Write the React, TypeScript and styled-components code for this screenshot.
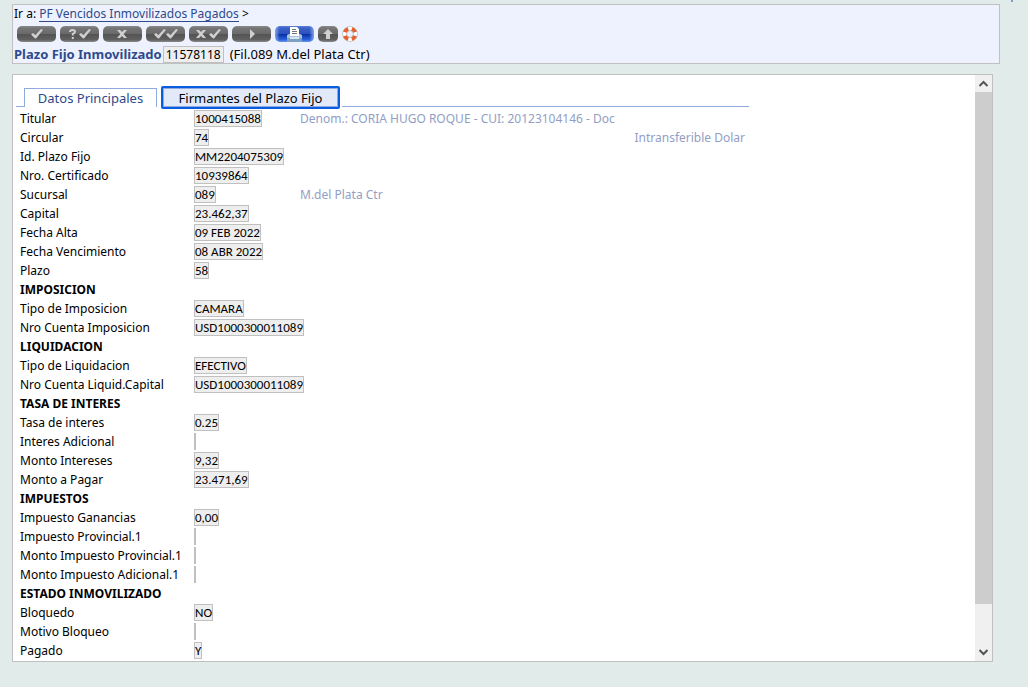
import React from 'react';
import styled, { createGlobalStyle, css } from 'styled-components';

const Global = createGlobalStyle`
  * { box-sizing: border-box; }
  html { background: #e1ebe9; }
  body {
    margin: 0;
    background: #e1ebe9;
    color: #000;
    font: 12px/18px "Trebuchet MS", "Noto Sans", sans-serif;
  }
`;

const Page = styled.div`
  position: relative;
  display: flex;
  flex-direction: column;
  gap: 10px;
  padding: 4px 28px 24px 12px;
`;

const CornerMark = styled.span`
  position: absolute;
  top: 0;
  right: 15px;
  width: 2px;
  height: 2px;
  background: #7b9cc4;
`;

const Header = styled.header`
  border: 1px solid #c0c0c0;
  background: #eef2ff;
  padding-left: 1px;
`;

const Line = styled.div<{ $large?: boolean }>`
  display: flex;
  align-items: center;
  height: 18px;
  font-size: ${p => (p.$large ? 13 : 12)}px;
  white-space: pre;
`;

const Crumb = styled.a`
  color: #2e4a8c;
  line-height: 15px;
  text-decoration: none;
  border-bottom: 1px solid #2e4a8c;
`;

const Title = styled.h1`
  margin: 0 1px 0 0;
  font-size: 13px;
  line-height: 18px;
  color: #2e4a8c;
`;

const Code = styled.output`
  border: 1px solid #c0c0c0;
  background: #eee;
  font-size: 12px;
  line-height: 15px;
  padding: 0 2px;
  margin-right: 6px;
`;

const Toolbar = styled.div`
  display: flex;
  align-items: center;
  gap: 4px;
  height: 22px;
  padding-left: 3px;
`;

const ToolButton = styled.button<{ $small?: boolean; $tone?: 'blue' | 'plain' }>`
  display: flex;
  justify-content: center;
  align-items: center;
  width: ${p => (p.$tone === 'plain' ? 16 : p.$small ? 20 : 39)}px;
  height: 16px;
  padding: 0;
  border: 0;
  border-radius: 5px;
  background: linear-gradient(#8c8c8c, #767676 12%, #6a6a6a 48%, #545454 52%, #606060 85%, #8a8a8a);
  ${p => p.$tone === 'blue' && css`
    background:
      linear-gradient(90deg, #7fa6ea 0, transparent 12%, transparent 88%, #7fa6ea 100%),
      linear-gradient(#5f84dc, #3d62c8 12%, #2c50bd 48%, #0c2fa4 52%, #2a62dd 85%, #6a96e8);
  `}
  ${p => p.$tone === 'plain' && css`
    background: none;
  `}
`;

const Panel = styled.main`
  display: flex;
  margin-right: 7px;
  border: 1px solid #c0c0c0;
  background: #fff;
`;

const Content = styled.div`
  flex: 1;
  min-width: 0;
  padding: 11px 0 1px 3px;
`;

const Tabs = styled.div`
  display: flex;
  align-items: flex-end;
  height: 23px;
  max-width: 733px;
`;

const Rule = styled.span<{ $grow?: boolean }>`
  ${p => (p.$grow ? 'flex: 1;' : 'width: 8px;')}
  height: 3px;
  border-bottom: 1px solid #8faadc;
  margin-bottom: 2px;
`;

const Tab = styled.button<{ $focused?: boolean }>`
  font: inherit;
  font-size: 13px;
  line-height: 18px;
  padding: 0;
  border: 1px solid #8faadc;
  border-bottom: 0;
  border-radius: 0;
  background: #fff;
  color: #2e4a8c;
  width: 133px;
  height: 19px;
  margin: 0 4px 2px 0;
  ${p => p.$focused && css`
    width: 179px;
    height: 23px;
    margin: 0 2px 0 0;
    border: 2px solid #0a5ce0;
    border-radius: 2px;
    box-shadow: inset 0 0 0 1px #8faadc;
    background: #e2eafa;
    color: #000;
  `}
`;

const Form = styled.div`
  max-width: 729px;
  padding-left: 4px;
`;

const Row = styled.div`
  display: grid;
  grid-template-columns: 174px 106px 1fr;
  align-items: center;
  height: 19px;
  white-space: nowrap;
`;

const Value = styled.output`
  justify-self: start;
  height: 17px;
  border: 1px solid #c0c0c0;
  background: #eee;
  font: 13px/15px Calibri, Carlito, Lato, sans-serif;
`;

const Note = styled.span<{ $end?: boolean }>`
  color: #929ec4;
  text-align: ${p => (p.$end ? 'right' : 'left')};
`;

const Section = styled.h2`
  margin: 0;
  font-size: 12px;
  line-height: 19px;
`;

const ScrollRail = styled.div`
  display: flex;
  flex-direction: column;
  width: 17px;
  background: #f0f0f0;
`;

const ScrollButton = styled.button`
  display: flex;
  align-items: center;
  justify-content: center;
  height: 17px;
  padding: 0;
  border: 0;
  background: #f0f0f0;
`;

const Thumb = styled.div`
  flex: 512;
  background: #cdcdcd;
`;

const Track = styled.div`
  flex: 40;
`;

const CHECK = 'M0 5.500l2-1.500 2.500 2L10 0l2 .8L5 9.500H4z';
const CROSS = 'M0 1h3l2 2 2-2h3L6.600 5 10 9H7L5 7 3 9H0l3.400-4z';

const Glyph = ({ paths }: { paths: [string, number][] }) => {
  const width = paths[paths.length - 1][1] + 12;
  return (
    <svg width={width} height="10" viewBox={`0 0 ${width} 10`} fill="#d0d0d0">
      {paths.map(([d, x]) => <path key={x} d={d} transform={`translate(${x} 0)`} />)}
    </svg>
  );
};

const Question = () => (
  <svg width="22" height="10" viewBox="0 0 22 10" fill="#d0d0d0">
    <path d="M1 3Q1 1 3.500 1 6 1 6 2.700 6 4 3.800 5V6.500" fill="none" stroke="#d0d0d0" strokeWidth="2" />
    <path d="M2.800 8h2v2h-2z" />
    <path d={CHECK} transform="translate(10 0)" />
  </svg>
);

const Printer = () => (
  <svg width="17" height="16" viewBox="0 0 17 16">
    <path d="M1 9l2-1h11l2 1v6l-1 1H2l-1-1z" fill="#a9c3dc" />
    <path d="M1 12h15v3l-1 1H2l-1-1z" fill="#7da0c0" />
    <path d="M4 1h7l2 2v7H4z" fill="#fff" />
    <path d="M6 3.500h4M6 5.500h5M6 7.500h5" stroke="#777" />
    <path d="M4 11h9v2H4z" fill="#d8e6f2" />
  </svg>
);

const Lifebuoy = () => (
  <svg width="16" height="16" viewBox="0 0 16 16" fill="none">
    <circle cx="8" cy="8" r="5.500" stroke="#fff" strokeWidth="4" />
    <circle cx="8" cy="8" r="5.500" stroke="#e8602c" strokeWidth="4" pathLength="80" strokeDasharray="11 9" strokeDashoffset="-4.500" />
    <circle cx="8" cy="8" r="7.500" stroke="#a09890" strokeOpacity=".6" strokeWidth=".8" />
    <circle cx="8" cy="8" r="3.400" stroke="#a09890" strokeWidth=".6" />
  </svg>
);

type Entry = { label: string; value?: string; note?: string; end?: boolean; section?: boolean };

const entries: Entry[] = [
  { label: 'Titular', value: '1000415088', note: 'Denom.: CORIA HUGO ROQUE - CUI: 20123104146 - Doc' },
  { label: 'Circular', value: '74', note: 'Intransferible Dolar', end: true },
  { label: 'Id. Plazo Fijo', value: 'MM2204075309' },
  { label: 'Nro. Certificado', value: '10939864' },
  { label: 'Sucursal', value: '089', note: 'M.del Plata Ctr' },
  { label: 'Capital', value: '23.462,37' },
  { label: 'Fecha Alta', value: '09 FEB 2022' },
  { label: 'Fecha Vencimiento', value: '08 ABR 2022' },
  { label: 'Plazo', value: '58' },
  { label: 'IMPOSICION', section: true },
  { label: 'Tipo de Imposicion', value: 'CAMARA' },
  { label: 'Nro Cuenta Imposicion', value: 'USD1000300011089' },
  { label: 'LIQUIDACION', section: true },
  { label: 'Tipo de Liquidacion', value: 'EFECTIVO' },
  { label: 'Nro Cuenta Liquid.Capital', value: 'USD1000300011089' },
  { label: 'TASA DE INTERES', section: true },
  { label: 'Tasa de interes', value: '0.25' },
  { label: 'Interes Adicional' },
  { label: 'Monto Intereses', value: '9,32' },
  { label: 'Monto a Pagar', value: '23.471,69' },
  { label: 'IMPUESTOS', section: true },
  { label: 'Impuesto Ganancias', value: '0,00' },
  { label: 'Impuesto Provincial.1' },
  { label: 'Monto Impuesto Provincial.1' },
  { label: 'Monto Impuesto Adicional.1' },
  { label: 'ESTADO INMOVILIZADO', section: true },
  { label: 'Bloquedo', value: 'NO' },
  { label: 'Motivo Bloqueo' },
  { label: 'Pagado', value: 'Y' },
];

const Chevron = ({ down }: { down?: boolean }) => (
  <svg width="9" height="7" viewBox="0 0 9 7" fill="none" stroke="#555" strokeWidth="2">
    <path d={down ? 'M.5 1L4.500 5l4-4' : 'M.5 6L4.500 2l4 4'} />
  </svg>
);

export default function App() {
  return (
    <Page>
      <Global />
      <CornerMark />
      <Header>
        <Line>Ir a: <Crumb href="#vencidos">PF Vencidos Inmovilizados Pagados</Crumb> &gt;</Line>
        <Toolbar>
          <ToolButton aria-label="Aceptar"><Glyph paths={[[CHECK, 0]]} /></ToolButton>
          <ToolButton aria-label="Validar"><Question /></ToolButton>
          <ToolButton aria-label="Cancelar"><Glyph paths={[[CROSS, 1]]} /></ToolButton>
          <ToolButton aria-label="Autorizar"><Glyph paths={[[CHECK, 0], [CHECK, 12]]} /></ToolButton>
          <ToolButton aria-label="Rechazar"><Glyph paths={[[CROSS, 0], [CHECK, 13]]} /></ToolButton>
          <ToolButton aria-label="Siguiente"><Glyph paths={[['M4 0l5 5-5 5z', 0]]} /></ToolButton>
          <ToolButton aria-label="Imprimir" $tone="blue"><Printer /></ToolButton>
          <ToolButton aria-label="Subir" $small><Glyph paths={[['M6 0l5 5H8v5H4V5H1z', 0]]} /></ToolButton>
          <ToolButton aria-label="Ayuda" $tone="plain"><Lifebuoy /></ToolButton>
        </Toolbar>
        <Line $large><Title>Plazo Fijo Inmovilizado</Title><Code>11578118</Code>(Fil.089 M.del Plata Ctr)</Line>
      </Header>
      <Panel>
        <Content>
          <Tabs role="tablist">
            <Rule />
            <Tab role="tab" aria-selected="true">Datos Principales</Tab>
            <Tab role="tab" aria-selected="false" $focused>Firmantes del Plazo Fijo</Tab>
            <Rule $grow />
          </Tabs>
          <Form>
            {entries.map((e, i) => e.section ? <Section key={i}>{e.label}</Section> : (
              <Row key={i}>
                <label htmlFor={`campo-${i}`}>{e.label}</label>
                <Value id={`campo-${i}`}>{e.value}</Value>
                {e.note && <Note $end={e.end}>{e.note}</Note>}
              </Row>
            ))}
          </Form>
        </Content>
        <ScrollRail>
          <ScrollButton aria-label="Desplazar arriba"><Chevron /></ScrollButton>
          <Thumb />
          <Track />
          <ScrollButton aria-label="Desplazar abajo"><Chevron down /></ScrollButton>
        </ScrollRail>
      </Panel>
    </Page>
  );
}
